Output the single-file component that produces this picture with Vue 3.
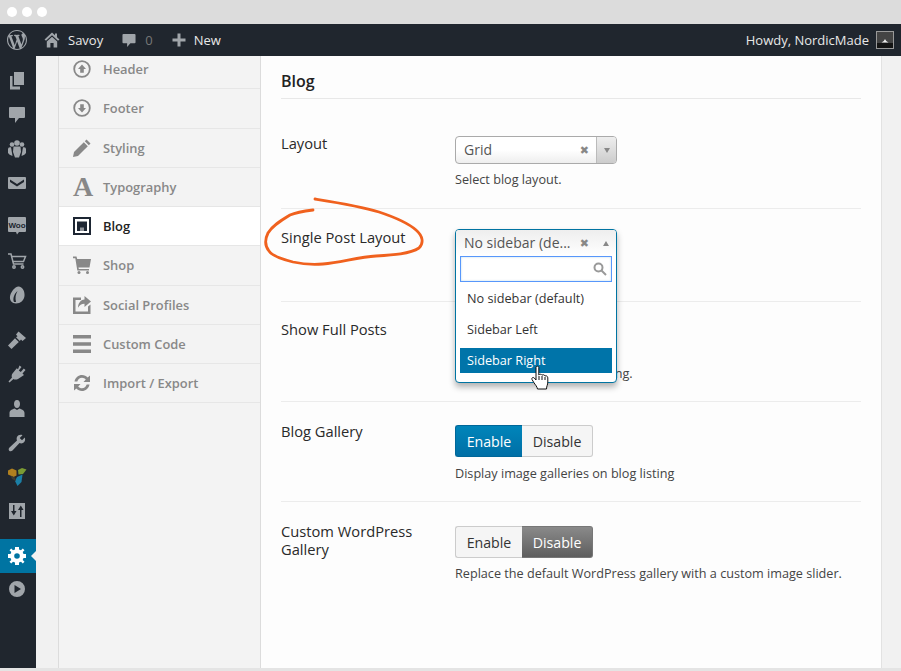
<template>
  <div class="app">
    <div class="chrome">
      <span class="dot"></span><span class="dot"></span><span class="dot"></span>
    </div>

    <header class="adminbar">
      <svg class="wp" viewBox="0 0 20 20"><path d="M20 10c0-5.51-4.49-10-10-10C4.48 0 0 4.49 0 10c0 5.52 4.48 10 10 10 5.51 0 10-4.48 10-10zM7.78 15.37L4.37 6.22c.55-.02 1.17-.08 1.17-.08.5-.06.44-1.13-.06-1.11 0 0-1.45.11-2.37.11-.18 0-.37 0-.58-.01C4.12 2.69 6.87 1.11 10 1.11c2.33 0 4.45.87 6.05 2.34-.68-.11-1.65.39-1.65 1.58 0 .74.45 1.36.9 2.1.35.61.55 1.36.55 2.46 0 1.49-1.4 5-1.4 5l-3.03-8.37c.54-.02.82-.17.82-.17.5-.05.44-1.25-.06-1.22 0 0-1.44.12-2.38.12-.87 0-2.33-.12-2.33-.12-.5-.03-.56 1.2-.06 1.22l.92.08 1.26 3.41zM17.41 10c.24-.64.74-1.87.43-4.25.7 1.29 1.05 2.71 1.05 4.25 0 3.29-1.73 6.24-4.4 7.78.97-2.59 1.94-5.2 2.92-7.78zM6.1 18.09C3.12 16.65 1.11 13.53 1.11 10c0-1.3.23-2.48.72-3.59C3.25 10.3 4.67 14.2 6.1 18.09zm4.03-6.63l2.58 6.98c-.86.29-1.76.45-2.71.45-.79 0-1.57-.11-2.29-.33.81-2.38 1.62-4.74 2.42-7.1z"/></svg>
      <svg class="home" viewBox="0 0 16 16"><path d="M8 0.5 L0.5 7.5 L2 8.8 L8 3.2 L14 8.8 L15.5 7.5 L13 5.2 V1.5 H11 V3.3Z"/><path d="M2.8 9.6 L8 4.8 L13.2 9.6 V15.5 H9.6 V11 H6.4 V15.5 H2.8Z"/></svg>
      <span class="bar-site">Savoy</span>
      <svg class="bubble" viewBox="0 0 15 16"><path d="M1.5 1 H13.5 Q14.500 1 14.500 2 V10 Q14.500 11 13.500 11 H9 L5.500 15 V11 H1.500 Q0.500 11 0.500 10 V2 Q0.500 1 1.500 1Z"/></svg>
      <span class="bar-count">0</span>
      <svg class="plus" viewBox="0 0 14 14"><path d="M5.500 0.500 H8.500 V5.500 H13.500 V8.500 H8.500 V13.500 H5.500 V8.500 H0.500 V5.500 H5.500Z"/></svg>
      <span class="bar-new">New</span>
      <span class="howdy">Howdy, NordicMade</span>
      <span class="avatar">
        <svg viewBox="0 0 16 16"><path d="M0 0H16V16H0Z" fill="#444"/><path d="M4.500 10.500 L6.800 9 L8 7 L9.200 9 L11.500 10.500Z" fill="#eee"/><path d="M0 11H16V16H0Z" fill="#141414"/></svg>
      </span>
    </header>

    <div class="body">
      <aside class="sidebar">
        <div class="group g1">
          <div class="side"><svg viewBox="0 0 20 20"><path d="M7 1 H17 V14 H7Z"/><path d="M3 5 H5.500 V15.500 H13 V18.500 H3Z"/></svg></div>
          <div class="side"><svg viewBox="0 0 20 20"><path d="M3 2 H17 Q18 2 18 3 V12 Q18 13 17 13 H12 L8 18 V13 H3 Q2 13 2 12 V3 Q2 2 3 2Z"/></svg></div>
          <div class="side"><svg viewBox="0 0 20 20"><circle cx="5" cy="5.500" r="2.300"/><circle cx="15" cy="5.500" r="2.300"/><circle cx="10" cy="4" r="2.800"/><path d="M1 9.500 Q1.500 8 4 8.200 L5.500 17 Q2 16 1 14Z"/><path d="M19 9.500 Q18.500 8 16 8.200 L14.500 17 Q18 16 19 14Z"/><path d="M6.500 7.500 H13.500 L14 13 L12 18.500 H8 L6 13Z"/></svg></div>
          <div class="side"><svg viewBox="0 0 20 20"><path fill-rule="evenodd" d="M2 4 H18 Q19 4 19 5 V15 Q19 16 18 16 H2 Q1 16 1 15 V5 Q1 4 2 4Z M3 6.500 L10 11 L17 6.500 L17 9 L10 13.500 L3 9Z"/></svg></div>
        </div>
        <div class="group g2">
          <div class="side">
            <svg viewBox="0 0 20 20"><path d="M2 1 H18 Q19 1 19 2 V15 Q19 16 18 16 H12 L10 18.500 L9 16 H2 Q1 16 1 15 V2 Q1 1 2 1Z"/><text x="10" y="11.500" class="woo">Woo</text></svg>
          </div>
          <div class="side"><svg viewBox="0 0 20 20" class="line"><path d="M1 3 H4 L6.500 13 H16.500"/><path d="M4.600 5.500 H18.500 L16.500 10.500 H5.800"/><circle cx="7" cy="16" r="1.200"/><circle cx="15.500" cy="16" r="1.200"/></svg></div>
          <div class="side"><svg viewBox="0 0 20 20"><path fill-rule="evenodd" d="M12 1.500 C16 2 18 7 17.500 11 C17 15.500 13.500 18.500 9 18.500 C5 18.500 2.500 15.500 3 11.500 C3.500 7.500 8 1 12 1.500Z M7 17 C5.500 14 7 9 10.500 6 C8.500 9.500 8 13 9 17Z"/></svg></div>
        </div>
        <div class="group g3">
          <div class="side"><svg viewBox="0 0 20 20"><path d="M11.500 1.500 L19 8 L15.500 11 L14 9.500 L12.800 11 L9 7.200 L10.500 6.200 L9 4.500Z"/><path d="M8 8.200 L11.800 12 L4.500 19 L1 15.500Z"/></svg></div>
          <div class="side"><svg viewBox="0 0 20 20"><path d="M12.500 1.500 L14.500 3 L11.800 6.500 L13.800 8 L16.800 4.500 L18.500 6 L15.500 9.500 L17 11 L11 15 C9 16 7 15.500 6.500 15 L2.500 18.500 L1.500 17.500 L5 13.500 C4.500 12.500 4.500 11 5.500 9.500 L9.800 4.200 L11 5.300Z"/></svg></div>
          <div class="side"><svg viewBox="0 0 20 20"><path d="M10 1 C12.200 1 13 3 13 5 C13 7 12 9 10 9 C8 9 7 7 7 5 C7 3 7.800 1 10 1Z"/><path d="M2.500 14 C2.500 11 5.500 10.500 7.500 9.500 L10 11 L12.500 9.500 C14.500 10.500 17.500 11 17.500 14 V18 H2.500Z"/></svg></div>
          <div class="side"><svg viewBox="0 0 20 20"><path d="M17.800 4.500 C18.600 6.500 18 9 16 10 C14.800 10.500 13.500 10.500 12.500 10 L5.500 17.500 C4.500 18.500 3 18.500 2.200 17.700 C1.500 17 1.500 15.500 2.500 14.500 L10 7.500 C9.500 6.500 9.500 5 10 4 C11 2 13.500 1.400 15.500 2.200 L12.700 5 L15 7.300Z"/></svg></div>
          <div class="side">
            <svg viewBox="0 0 20 20">
              <path d="M1 3.500 L5 1.500 L9.500 3.500 L9.500 8.500 L6.500 10 L1 7.500Z" fill="#b0801f"/>
              <path d="M11 3 L15 1 L19.500 2.500 L16 7 L11.500 7.500Z" fill="#7b9a33"/>
              <path d="M10 10 L15.500 7.500 L14.500 15 L10.500 19 L8 14Z" fill="#1b7fa6"/>
              <path d="M3.500 8.500 L8 10.500 L9 14 L5 12Z" fill="#3c3c32"/>
            </svg>
          </div>
          <div class="side"><svg viewBox="0 0 20 20"><path fill-rule="evenodd" d="M2 2 H18 V18 H2Z M6 4 V10 H4 L6.800 14.500 L9.500 10 H7.500 V4Z M13 16 V9 H11 L13.800 4.500 L16.500 9 H14.500 V16Z"/></svg></div>
        </div>
        <div class="side active">
          <svg viewBox="0 0 20 20"><path fill-rule="evenodd" d="M8 1 H12 V3.500 L14 4.300 L15.800 2.500 L17.500 4.200 L15.700 6 L16.500 8 H19 V12 H16.500 L15.700 14 L17.500 15.800 L15.800 17.500 L14 15.700 L12 16.500 V19 H8 V16.500 L6 15.700 L4.200 17.500 L2.500 15.800 L4.300 14 L3.500 12 H1 V8 H3.500 L4.300 6 L2.500 4.200 L4.200 2.500 L6 4.300 L8 3.500Z M10 7.200 A2.800 2.800 0 1 0 10 12.800 A2.800 2.800 0 1 0 10 7.200Z"/></svg>
        </div>
        <div class="side last"><svg viewBox="0 0 20 20"><path fill-rule="evenodd" d="M10 2 A8 8 0 1 0 10 18 A8 8 0 1 0 10 2Z M7.500 6 L14 10 L7.500 14Z"/></svg></div>
      </aside>

      <div class="panel">
        <nav class="nav">
          <a class="item">
            <svg viewBox="0 0 18 18"><circle cx="9" cy="9" r="7.800" class="ring-ico"/><path d="M9 4.500 L13 9 H10.800 V12.800 H7.200 V9 H5Z"/></svg>
            <span>Header</span>
          </a>
          <a class="item">
            <svg viewBox="0 0 18 18"><circle cx="9" cy="9" r="7.800" class="ring-ico"/><path d="M9 13.500 L13 9 H10.800 V5.200 H7.200 V9 H5Z"/></svg>
            <span>Footer</span>
          </a>
          <a class="item">
            <svg viewBox="0 0 18 18"><path d="M13.500 0.500 L17.500 4.500 L15.800 6.200 L11.800 2.200Z"/><path d="M10.800 3.200 L14.800 7.200 L5 17 L0 18 L1 13Z"/></svg>
            <span>Styling</span>
          </a>
          <a class="item">
            <span class="glyph">A</span>
            <span>Typography</span>
          </a>
          <a class="item current">
            <svg viewBox="0 0 18 18"><path fill-rule="evenodd" d="M0 0 H18 V18 H0Z M2 2 V16 H16 V2Z"/><path d="M4 4.500 H14 V14 H10.500 V10.500 H9.500 V14 H8.500 V10.500 H7.500 V14 H4Z"/></svg>
            <span>Blog</span>
          </a>
          <a class="item">
            <svg viewBox="0 0 18 18"><path d="M0 0.500 H3.500 L4.200 3 H18 L16.500 11.500 H5.500 L5.800 13 H16 V14.500 H4.300 L2.300 2.200 H0Z"/><circle cx="6" cy="16.500" r="1.500"/><circle cx="14.500" cy="16.500" r="1.500"/></svg>
            <span>Shop</span>
          </a>
          <a class="item">
            <svg viewBox="0 0 18 18"><path d="M0 1.500 H8 V4 H2.500 V15.500 H15 V10.500 L17.500 8.500 V18 H0Z"/><path d="M11.500 0 L18 5.500 L11.500 11 V7.800 C8.500 7.800 6.500 9 5 11.800 C5 7.500 7.500 3.800 11.500 3.500Z"/></svg>
            <span>Social Profiles</span>
          </a>
          <a class="item">
            <svg viewBox="0 0 18 18"><path d="M0 0 H18 V3.600 H0Z M0 7.200 H18 V10.800 H0Z M0 14.400 H18 V18 H0Z"/></svg>
            <span>Custom Code</span>
          </a>
          <a class="item">
            <svg viewBox="0 0 18 18"><path d="M1.500 7.500 C2.300 3.500 5.500 1 9 1 C11.300 1 13.300 2 14.700 3.500 L17 1.500 V8 H10.500 L12.800 5.600 C11.800 4.500 10.500 3.800 9 3.800 C6.800 3.800 5 5.300 4.300 7.500Z"/><path d="M16.500 10.500 C15.700 14.500 12.500 17 9 17 C6.700 17 4.700 16 3.300 14.500 L1 16.500 V10 H7.500 L5.200 12.400 C6.200 13.500 7.500 14.200 9 14.200 C11.200 14.200 13 12.700 13.700 10.500Z"/></svg>
            <span>Import / Export</span>
          </a>
        </nav>

        <main class="main">
          <h2 class="title">Blog</h2>

          <section class="row r1">
            <div class="label">Layout</div>
            <div class="field">
              <div class="select">
                <span class="value">Grid</span>
                <span class="clear">✖</span>
                <span class="arrow"><i class="tri down"></i></span>
              </div>
              <p class="desc">Select blog layout.</p>
            </div>
          </section>

          <section class="row r2">
            <div class="label">Single Post Layout</div>
            <div class="field">
              <div class="dropdown">
                <div class="dd-head">
                  <span class="value">No sidebar (de...</span>
                  <span class="clear">✖</span>
                  <i class="tri up"></i>
                </div>
                <div class="search">
                  <svg viewBox="0 0 14 14"><circle cx="5.500" cy="5.500" r="4"/><path d="M8.500 8.500 L13 13"/></svg>
                </div>
                <ul class="options">
                  <li>No sidebar (default)</li>
                  <li>Sidebar Left</li>
                  <li class="hot">Sidebar Right</li>
                </ul>
                <svg class="hand" viewBox="0 0 18 25"><path d="M5 2.500 C5 0.700 7.800 0.700 7.800 2.500 V10 C8.500 9 10.500 9 11 10.200 C11.800 9.400 13.500 9.600 14 11 C15 10.500 16.800 11 16.800 12.800 V17 C16.800 20 15.500 21 15.500 24 H6.500 C6 21.500 4.500 20 2.800 17.500 L1 14.500 C0.300 13 2 11.700 3.300 13 L5 15Z M8 11 V15 M11 11 V15 M14 12 V15"/></svg>
              </div>
            </div>
          </section>

          <section class="row r3">
            <div class="label">Show Full Posts</div>
            <div class="field">
              <!-- the toggle of this row sits behind the open dropdown -->
              <div class="toggle"></div>
              <p class="desc">Show full posts on blog listing.</p>
            </div>
          </section>

          <section class="row r4">
            <div class="label">Blog Gallery</div>
            <div class="field">
              <div class="toggle">
                <button class="on">Enable</button><button>Disable</button>
              </div>
              <p class="desc">Display image galleries on blog listing</p>
            </div>
          </section>

          <section class="row r5">
            <div class="label">Custom WordPress Gallery</div>
            <div class="field">
              <div class="toggle">
                <button>Enable</button><button class="off">Disable</button>
              </div>
              <p class="desc">Replace the default WordPress gallery with a custom image slider.</p>
            </div>
          </section>

          <!-- hand drawn marker round the label -->
          <svg class="marker" viewBox="0 0 170 70">
            <path d="M51 2 C70 5 96 9 115 15 C130 20 143 25 152 33 C159 39 160 46 155 51 C146 57 129 58 112 59 C95 60 78 65 59 67 C47 68 38 67 29 65 C17 62 8 59 5 54 C1 49 1 42 4 36 C8 29 16 24 26 18 C33 15 41 14 49 13"/>
          </svg>
        </main>
      </div>
    </div>
  </div>
</template>

<script setup>
</script>

<style>
html, body {
  margin: 0;
  overflow: hidden;
  background: #e4e4e4;
}
</style>

<style scoped>
.app {
  width: 901px;
  height: 671px;
  display: flex;
  flex-direction: column;
  font-family: "Open Sans", "Liberation Sans", sans-serif;
  background: #e4e4e4;
}
.chrome {
  height: 24px;
  flex: none;
  background: #dcdcdc;
  display: flex;
  align-items: center;
  gap: 5px;
  padding: 0 0 0 7px;
  box-sizing: border-box;
}
.dot {
  width: 10px;
  height: 10px;
  border-radius: 50%;
  background: #fff;
}
.adminbar {
  height: 32px;
  flex: none;
  background: #20262e;
  display: flex;
  align-items: center;
  font-size: 13px;
  color: #e8e8e8;
}
.adminbar svg {
  fill: #a0a5aa;
  flex: none;
}
.wp {
  width: 20px;
  height: 20px;
  margin-left: 7px;
}
.home {
  width: 16px;
  height: 16px;
  margin-left: 17px;
}
.bar-site {
  margin-left: 8px;
}
.bubble {
  width: 14px;
  height: 15px;
  margin-left: 19px;
}
.bar-count {
  margin-left: 9px;
  color: #777;
}
.plus {
  width: 14px;
  height: 14px;
  margin-left: 19px;
}
.bar-new {
  margin-left: 8px;
}
.howdy {
  margin-left: auto;
}
.avatar {
  width: 16px;
  height: 16px;
  border: 1px solid #999;
  margin: 0 7px 0 7px;
  display: block;
}
.avatar svg {
  display: block;
  width: 16px;
  height: 16px;
}
.body {
  height: 612px;
  flex: none;
  display: flex;
  background: #f1f1f1;
}
.sidebar {
  width: 36px;
  flex: none;
  background: #20262e;
  padding-top: 8px;
  box-sizing: border-box;
}
.side {
  height: 34px;
  padding-right: 2px;
  display: flex;
  align-items: center;
  justify-content: center;
}
.side svg {
  width: 20px;
  height: 20px;
  fill: #a0a5aa;
}
.side svg.line {
  fill: none;
  stroke: #a0a5aa;
  stroke-width: 1.5;
}
.woo {
  font: 700 8px "Liberation Sans", sans-serif;
  text-anchor: middle;
  fill: #20262e;
}
.g2 {
  margin-top: 9px;
}
.g2 .side {
  height: 34.5px;
}
.g3 {
  margin-top: 10.6px;
}
.g3 .side {
  height: 34.2px;
}
.side.active {
  margin-top: 11px;
  background: #0074a2;
  position: relative;
}
.side.active svg {
  fill: #fff;
}
.side.active::after {
  content: "";
  position: absolute;
  right: 0;
  top: 12px;
  border: 5px solid transparent;
  border-right-color: #f1f1f1;
  border-left-width: 0;
}
.side.last {
  height: 32px;
}
.panel {
  margin-left: 22px;
  width: 823px;
  display: flex;
  border-right: 1px solid #e2e2e2;
}
.nav {
  width: 203px;
  flex: none;
  box-sizing: border-box;
  background: #f3f3f3;
  border-left: 1px solid #dcdcdc;
  border-right: 1px solid #dcdcdc;
  overflow: hidden;
}
.item {
  height: 39.25px;
  box-sizing: border-box;
  border-bottom: 1px solid #e6e6e6;
  display: flex;
  align-items: center;
  padding-left: 14px;
  gap: 12px;
  font-size: 12.9px;
  font-weight: 600;
  color: #888;
}
.item:first-child {
  margin-top: -6px;
}
.item svg {
  width: 18px;
  height: 18px;
  fill: #888;
  flex: none;
}
.ring-ico {
  fill: none;
  stroke: #888;
  stroke-width: 1.800;
}
.glyph {
  width: 18px;
  text-align: center;
  font: 700 28px/18px "Liberation Serif", serif;
  flex: none;
}
.item.current {
  background: #fff;
  color: #222;
}
.item.current svg {
  fill: #1d2633;
}
.main {
  position: relative;
  flex: 1;
  background: #fdfdfd;
  padding: 0 20px 0 20px;
  color: #333;
}
.title {
  margin: 0;
  padding: 14px 0 6px;
  font-size: 16px;
  font-weight: 600;
  line-height: 22px;
  color: #222;
  border-bottom: 1px solid #e8e8e8;
}
.row {
  display: grid;
  grid-template-columns: 174px 1fr;
  box-sizing: border-box;
  border-bottom: 1px solid #ececec;
}
.r1 { height: 110px; padding-top: 37px; }
.r2 { height: 93px; padding-top: 20px; }
.r3 { height: 100px; padding-top: 23px; }
.r4 { height: 100px; padding-top: 23px; }
.r5 { padding-top: 24px; border-bottom: 0; }
.label {
  font-size: 14.7px;
  font-weight: 500;
  line-height: 18px;
  color: #2a2a2a;
}
.r1 .label { margin-top: -2px; }
.r2 .label { margin-top: -1px; }
.r3 .label { margin-top: -5px; }
.r4 .label { margin-top: -3px; }
.r5 .label { margin-top: -4px; width: 140px; }
.field {
  position: relative;
}
.desc {
  margin: 7px 0 0;
  font-size: 12.65px;
  line-height: 18px;
  color: #444;
}
.r1 .desc, .r5 .desc {
  margin-top: 6px;
}
.select {
  width: 162px;
  height: 28px;
  box-sizing: border-box;
  border: 1px solid #aaa;
  border-radius: 4px;
  background: linear-gradient(#fff 50%, #eee);
  display: flex;
  align-items: center;
  padding-left: 8px;
}
.value {
  flex: 1;
  font-size: 14px;
  color: #555;
  white-space: nowrap;
  padding-bottom: 2px;
}
.clear {
  font: 11px "DejaVu Sans", sans-serif;
  color: #888;
}
.arrow {
  width: 20px;
  height: 100%;
  margin-left: 7px;
  box-sizing: border-box;
  border-left: 1px solid #bbb;
  background: linear-gradient(#eee, #ccc);
  border-radius: 0 3px 3px 0;
  display: flex;
  align-items: center;
  justify-content: center;
}
.tri {
  display: block;
  width: 0;
  height: 0;
  border-left: 3.500px solid transparent;
  border-right: 3.500px solid transparent;
}
.tri.down {
  border-top: 5px solid #888;
}
.tri.up {
  border-bottom: 5px solid #888;
  margin: 0 7px 0 14px;
}
.dropdown {
  position: absolute;
  left: 0;
  top: 0;
  width: 162px;
  height: 154px;
  box-sizing: border-box;
  border: 1px solid #0074a2;
  border-radius: 4px;
  background: #fff;
  box-shadow: 0 4px 6px rgba(0, 0, 0, 0.3);
  z-index: 2;
}
.dd-head {
  height: 26px;
  display: flex;
  align-items: center;
  padding-left: 8px;
  background: linear-gradient(#eee, #fff);
  border-radius: 3px 3px 0 0;
}
.search {
  margin: 0 4px;
  height: 26px;
  box-sizing: border-box;
  border: 1px solid #5897fb;
  box-shadow: inset 0 0 2px rgba(0, 116, 162, 0.3);
  display: flex;
  align-items: center;
  justify-content: flex-end;
  padding-right: 4px;
}
.search svg {
  width: 14px;
  height: 14px;
  fill: none;
  stroke: #999;
  stroke-width: 2;
}
.options {
  list-style: none;
  margin: 0;
  padding: 1px 4px 0;
  font-size: 12.7px;
  color: #333;
}
.options li {
  height: 31px;
  line-height: 31px;
  padding-left: 7px;
}
.options li.hot {
  height: 25px;
  line-height: 25px;
  margin-top: 3px;
  background: #0074a9;
  color: #fff;
}
.hand {
  position: absolute;
  left: 75px;
  top: 135px;
  width: 18px;
  height: 25px;
  fill: #fff;
  stroke: #111;
  stroke-width: 1;
}
.toggle {
  display: flex;
  height: 32px;
  width: 138px;
}
.toggle button {
  font: 500 14.2px "Open Sans", "Liberation Sans", sans-serif;
  color: #333;
  background: #f5f5f5;
  border: 1px solid #ccc;
  padding: 0;
  width: 71px;
}
.toggle button:first-child {
  width: 67px;
  border-right: 0;
  border-radius: 3px 0 0 3px;
}
.toggle button:last-child {
  border-left: 0;
  border-radius: 0 3px 3px 0;
}
.toggle button.on {
  background: linear-gradient(#0085ba, #006fa6);
  border-color: #006799;
  color: #fff;
}
.toggle button.off {
  background: linear-gradient(#8a8a8a, #5e5e5e);
  border-color: #777;
  color: #fff;
}
.marker {
  position: absolute;
  left: 3px;
  top: 141px;
  width: 170px;
  height: 70px;
  fill: none;
  stroke: #f0611e;
  stroke-width: 2.800;
  stroke-linecap: round;
  pointer-events: none;
}
</style>
